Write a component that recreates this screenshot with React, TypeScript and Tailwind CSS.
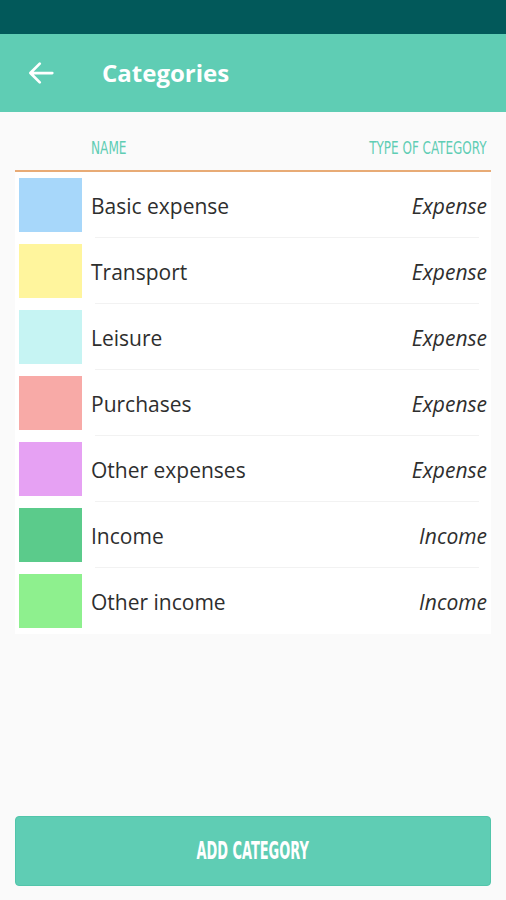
import React from "react";

const rows = [
  { name: "Basic expense", type: "Expense", color: "bg-[#a7d7fa]" },
  { name: "Transport", type: "Expense", color: "bg-[#fff59d]" },
  { name: "Leisure", type: "Expense", color: "bg-[#c6f4f3]" },
  { name: "Purchases", type: "Expense", color: "bg-[#f8aaa7]" },
  { name: "Other expenses", type: "Expense", color: "bg-[#e6a1f3]" },
  { name: "Income", type: "Income", color: "bg-[#5bcb8b]" },
  { name: "Other income", type: "Income", color: "bg-[#8ef08e]" },
];

const cond = { fontFamily: '"DejaVu Sans Condensed", "DejaVu Sans", sans-serif', fontStretch: "condensed" } as const;

export default function App() {
  return (
    <div className="w-[506px] h-[900px] bg-[#fafafa] flex flex-col" style={{ fontFamily: '"Open Sans", sans-serif' }}>
      <div className="h-[34px] bg-[#02595a]" />
      <div className="h-[78px] bg-[#5fcdb4] flex items-center">
        <svg className="ml-[26px]" width="30" height="30" viewBox="0 0 24 24" fill="none" stroke="white" strokeWidth="2.2" strokeLinecap="round" strokeLinejoin="round">
          <path d="M21 12H3.5M11 4.5L3.5 12l7.5 7.5" />
        </svg>
        <div className="ml-[46px] text-white text-[24px] font-bold">Categories</div>
      </div>
      <div className="mx-[15px] flex flex-col">
        <div className="h-[60px] flex items-end pb-[9px] border-b-2 border-[#e8ab76] text-[#5fcdb4] text-[18px] uppercase" style={cond}>
          <span className="ml-[76px] inline-block origin-left scale-x-[0.75]">Name</span>
          <span className="ml-auto mr-[4px] inline-block origin-right scale-x-[0.74]">Type of category</span>
        </div>
        <div className="bg-white flex flex-col">
          {rows.map((r, i) => (
            <div key={i} className="h-[66px] flex items-center relative">
              <div className={`ml-[4px] w-[63px] h-[54px] ${r.color}`} />
              <div className="ml-[9px] mt-[3px] text-[21px] text-[#2e2e2e]">{r.name}</div>
              <div className="ml-auto mr-[4px] mt-[3px] text-[21px] italic text-[#2e2e2e]">{r.type}</div>
              {i < rows.length - 1 && <div className="absolute left-[80px] right-[12px] bottom-0 h-px bg-[#f2f2f2]" />}
            </div>
          ))}
        </div>
      </div>
      <div className="flex-1" />
      <div className="mx-[15px] mb-[14px] h-[70px] rounded-[4px] bg-[#5fcdb4] border border-[#52c5aa] flex items-center justify-center">
        <span className="text-white text-[24px] font-bold inline-block scale-x-[0.6]" style={cond}>ADD CATEGORY</span>
      </div>
    </div>
  );
}
